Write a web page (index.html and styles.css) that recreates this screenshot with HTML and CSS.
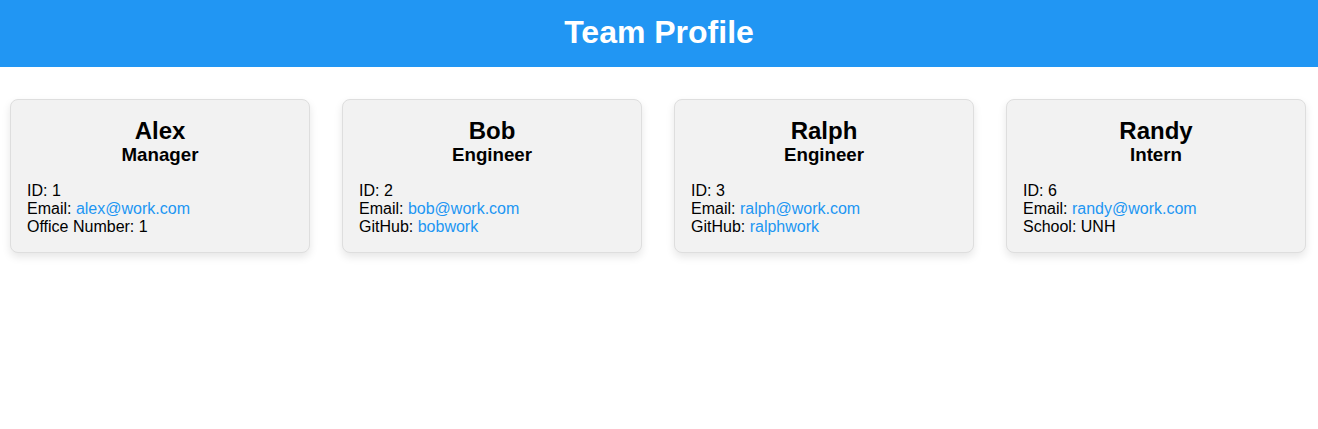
FILE: index.html
```html
<!DOCTYPE html>
<html>
<head>
<meta charset="utf-8">
<title>Team Profile</title>
<link rel="stylesheet" href="styles.css">
</head>
<body>
<header class="header"><h1 class="title">Team Profile</h1></header>
<main class="team">
  <div class="card">
    <h2 class="name">Alex</h2>
    <h3 class="role">Manager</h3>
    <div class="info">
      <div>ID: 1</div>
      <div>Email: <a href="#">alex@work.com</a></div>
      <div>Office Number: 1</div>
    </div>
  </div>
  <div class="card">
    <h2 class="name">Bob</h2>
    <h3 class="role">Engineer</h3>
    <div class="info">
      <div>ID: 2</div>
      <div>Email: <a href="#">bob@work.com</a></div>
      <div>GitHub: <a href="#">bobwork</a></div>
    </div>
  </div>
  <div class="card">
    <h2 class="name">Ralph</h2>
    <h3 class="role">Engineer</h3>
    <div class="info">
      <div>ID: 3</div>
      <div>Email: <a href="#">ralph@work.com</a></div>
      <div>GitHub: <a href="#">ralphwork</a></div>
    </div>
  </div>
  <div class="card">
    <h2 class="name">Randy</h2>
    <h3 class="role">Intern</h3>
    <div class="info">
      <div>ID: 6</div>
      <div>Email: <a href="#">randy@work.com</a></div>
      <div>School: UNH</div>
    </div>
  </div>
</main>
</body>
</html>
```
FILE: styles.css
```css
body {
  margin: 0;
  font-family: "Liberation Sans", Arial, sans-serif;
  font-size: 16px;
  color: #000;
  background: #fff;
}
.header {
  background: #2196f3;
  height: 67px;
  box-sizing: border-box;
  padding-bottom: 2px;
  display: flex;
  align-items: center;
  justify-content: center;
}
.title {
  margin: 0;
  color: #fff;
  font-size: 32px;
  font-weight: bold;
}
.team {
  display: flex;
  gap: 32px;
  padding: 32px 10px;
}
.card {
  width: 300px;
  box-sizing: border-box;
  background: #f2f2f2;
  border: 1px solid #dedede;
  border-radius: 8px;
  box-shadow: 0 4px 8px rgba(0, 0, 0, 0.1);
  padding: 17px 16px 16px;
}
.name {
  margin: 0;
  text-align: center;
  font-size: 24px;
  line-height: 28px;
}
.role {
  margin: 0;
  text-align: center;
  font-size: 18.72px;
  line-height: 19px;
}
.info {
  margin-top: 18px;
  line-height: 18px;
}
.info a {
  color: #2196f3;
  text-decoration: none;
}
```
